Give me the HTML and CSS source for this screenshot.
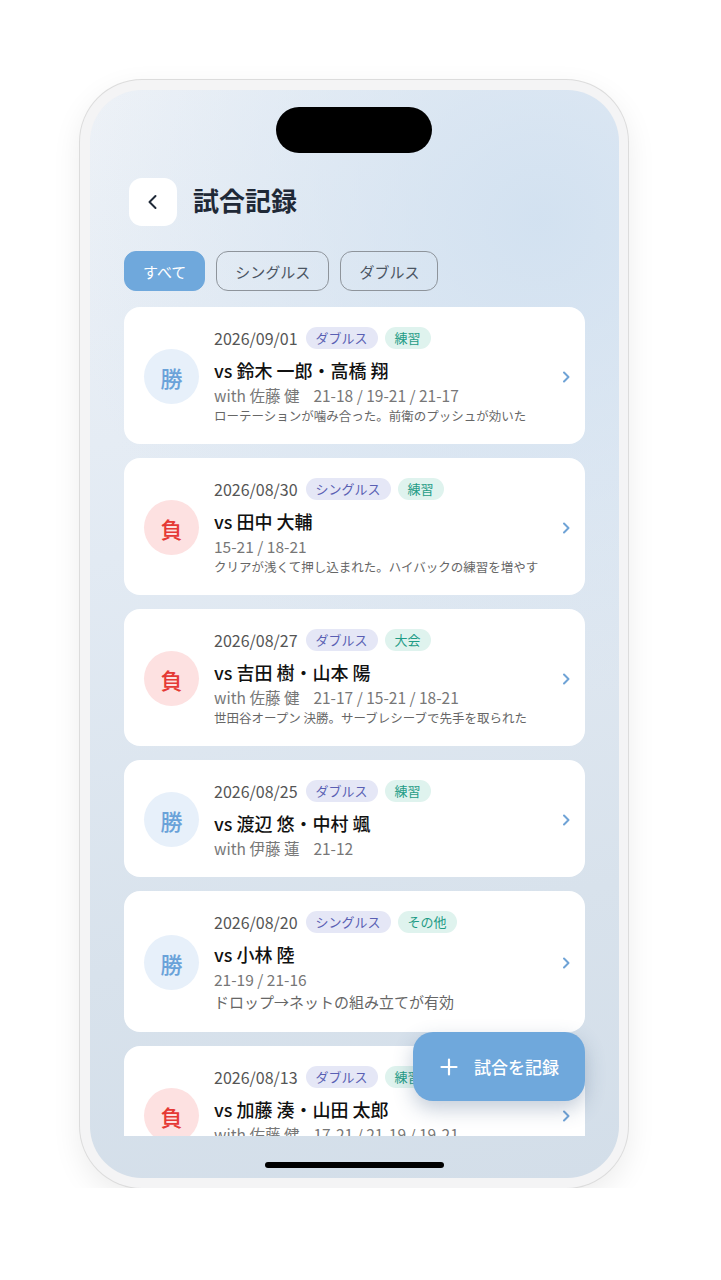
FILE: index.html
```html
<!DOCTYPE html>
<html>
    <head>
        <title>試合記録</title>
        <link rel="stylesheet" href="styles.css">
    </head>

    <body>
        <!--Phone frame-->
        <div class="PHONE">
            <div class="SCREEN">
                <div class="ISLAND"></div>

                <!--Header with back button and title-->
                <div class="HEADER">
                    <div class="BACK_BUTTON">
                        <svg width="18" height="18" viewBox="0 0 18 18"><path d="M11.5 3 L5.5 9 L11.5 15" fill="none" stroke="#1f2937" stroke-width="2" stroke-linecap="round" stroke-linejoin="round"/></svg>
                    </div>
                    <div class="TITLE">試合記録</div>
                </div>

                <!--Filter chips-->
                <div class="FILTERS">
                    <div class="CHIP CHIP_ACTIVE">すべて</div>
                    <div class="CHIP">シングルス</div>
                    <div class="CHIP">ダブルス</div>
                </div>

                <!--Match list-->
                <div class="MATCH_LIST">
                    <div class="CARD">
                        <div class="RESULT WIN">勝</div>
                        <div class="INFO">
                            <div class="META"><span class="DATE">2026/09/01</span><span class="TAG TAG_TYPE">ダブルス</span><span class="TAG TAG_KIND">練習</span></div>
                            <div class="OPPONENT">vs 鈴木 一郎・高橋 翔</div>
                            <div class="DETAIL">with 佐藤 健<span class="SCORE">21-18 / 19-21 / 21-17</span></div>
                            <div class="NOTE">ローテーションが噛み合った。前衛のプッシュが効いた</div>
                        </div>
                        <svg class="CHEVRON" width="10" height="14" viewBox="0 0 10 14"><path d="M3 2.5 L7.5 7 L3 11.5" fill="none" stroke="#6fa3d6" stroke-width="2" stroke-linecap="round" stroke-linejoin="round"/></svg>
                    </div>

                    <div class="CARD">
                        <div class="RESULT LOSE">負</div>
                        <div class="INFO">
                            <div class="META"><span class="DATE">2026/08/30</span><span class="TAG TAG_TYPE">シングルス</span><span class="TAG TAG_KIND">練習</span></div>
                            <div class="OPPONENT">vs 田中 大輔</div>
                            <div class="DETAIL">15-21 / 18-21</div>
                            <div class="NOTE">クリアが浅くて押し込まれた。ハイバックの練習を増やす</div>
                        </div>
                        <svg class="CHEVRON" width="10" height="14" viewBox="0 0 10 14"><path d="M3 2.5 L7.5 7 L3 11.5" fill="none" stroke="#6fa3d6" stroke-width="2" stroke-linecap="round" stroke-linejoin="round"/></svg>
                    </div>

                    <div class="CARD">
                        <div class="RESULT LOSE">負</div>
                        <div class="INFO">
                            <div class="META"><span class="DATE">2026/08/27</span><span class="TAG TAG_TYPE">ダブルス</span><span class="TAG TAG_KIND">大会</span></div>
                            <div class="OPPONENT">vs 吉田 樹・山本 陽</div>
                            <div class="DETAIL">with 佐藤 健<span class="SCORE">21-17 / 15-21 / 18-21</span></div>
                            <div class="NOTE">世田谷オープン 決勝。サーブレシーブで先手を取られた</div>
                        </div>
                        <svg class="CHEVRON" width="10" height="14" viewBox="0 0 10 14"><path d="M3 2.5 L7.5 7 L3 11.5" fill="none" stroke="#6fa3d6" stroke-width="2" stroke-linecap="round" stroke-linejoin="round"/></svg>
                    </div>

                    <div class="CARD">
                        <div class="RESULT WIN">勝</div>
                        <div class="INFO">
                            <div class="META"><span class="DATE">2026/08/25</span><span class="TAG TAG_TYPE">ダブルス</span><span class="TAG TAG_KIND">練習</span></div>
                            <div class="OPPONENT">vs 渡辺 悠・中村 颯</div>
                            <div class="DETAIL">with 伊藤 蓮<span class="SCORE">21-12</span></div>
                        </div>
                        <svg class="CHEVRON" width="10" height="14" viewBox="0 0 10 14"><path d="M3 2.5 L7.5 7 L3 11.5" fill="none" stroke="#6fa3d6" stroke-width="2" stroke-linecap="round" stroke-linejoin="round"/></svg>
                    </div>

                    <div class="CARD">
                        <div class="RESULT WIN">勝</div>
                        <div class="INFO">
                            <div class="META"><span class="DATE">2026/08/20</span><span class="TAG TAG_TYPE">シングルス</span><span class="TAG TAG_KIND">その他</span></div>
                            <div class="OPPONENT">vs 小林 陸</div>
                            <div class="DETAIL">21-19 / 21-16</div>
                            <div class="NOTE NOTE_LARGE">ドロップ→ネットの組み立てが有効</div>
                        </div>
                        <svg class="CHEVRON" width="10" height="14" viewBox="0 0 10 14"><path d="M3 2.5 L7.5 7 L3 11.5" fill="none" stroke="#6fa3d6" stroke-width="2" stroke-linecap="round" stroke-linejoin="round"/></svg>
                    </div>

                    <div class="CARD">
                        <div class="RESULT LOSE">負</div>
                        <div class="INFO">
                            <div class="META"><span class="DATE">2026/08/13</span><span class="TAG TAG_TYPE">ダブルス</span><span class="TAG TAG_KIND">練習</span></div>
                            <div class="OPPONENT">vs 加藤 湊・山田 太郎</div>
                            <div class="DETAIL">with 佐藤 健<span class="SCORE">17-21 / 21-19 / 19-21</span></div>
                            <div class="NOTE">スマッシュの決定率が低かった</div>
                        </div>
                        <svg class="CHEVRON" width="10" height="14" viewBox="0 0 10 14"><path d="M3 2.5 L7.5 7 L3 11.5" fill="none" stroke="#6fa3d6" stroke-width="2" stroke-linecap="round" stroke-linejoin="round"/></svg>
                    </div>
                </div>

                <!--Floating add button-->
                <div class="FAB">
                    <svg width="18" height="18" viewBox="0 0 18 18"><path d="M9 1.5 V16.5 M1.5 9 H16.5" stroke="#ffffff" stroke-width="2.2" stroke-linecap="round"/></svg>
                    <span>試合を記録</span>
                </div>

                <div class="HOME_BAR"></div>
            </div>
        </div>
    </body>
</html>
```

FILE: styles.css
```css
/*Accent blue: #6FA8DC*/
body {
    margin: 0;
    background-color: #ffffff;
    font-family: "Noto Sans CJK JP", "Noto Sans", sans-serif;
}
.PHONE {
    width: 529px;
    height: 1088px;
    margin-top: 80px;
    margin-left: 80px;
    padding: 10px 9px 10px 10px;
    border-radius: 62px;
    background-color: #f4f4f5;
    box-shadow: 0 0 0 1px #dcdcdc, 0 10px 30px rgba(0, 0, 0, 0.08);
}
.SCREEN {
    position: relative;
    overflow: hidden;
    box-sizing: border-box;
    height: 100%;
    padding: 88px 34px 42px 34px;
    border-radius: 52px;
    display: flex;
    flex-direction: column;
    background:
        radial-gradient(circle at 85% 12%, rgba(208, 224, 240, 0.9) 0%, rgba(208, 224, 240, 0) 45%),
        linear-gradient(170deg, #eef2f7 0%, #e2eaf3 40%, #d8e2ec 75%, #d3dee9 100%);
}
.ISLAND {
    position: absolute;
    top: 17px;
    left: 186px;
    width: 156px;
    height: 46px;
    border-radius: 23px;
    background-color: #000000;
}
/*Header*/
.HEADER {
    display: flex;
    align-items: center;
    gap: 16px;
    padding-left: 5px;
}
.BACK_BUTTON {
    width: 48px;
    height: 48px;
    border-radius: 13px;
    background-color: #ffffff;
    display: flex;
    align-items: center;
    justify-content: center;
}
.TITLE {
    margin-bottom: 6px;
    font-size: 26px;
    font-weight: 700;
    color: #1f2937;
}
/*Filters*/
.FILTERS {
    display: flex;
    gap: 11px;
    margin-top: 25px;
}
.CHIP {
    height: 40px;
    box-sizing: border-box;
    padding: 0 18px;
    border: 1px solid #8e949b;
    border-radius: 12px;
    font-size: 15px;
    color: #4b5563;
    display: flex;
    align-items: center;
}
.CHIP_ACTIVE {
    border-color: #6fa8dc;
    background-color: #6fa8dc;
    color: #ffffff;
}
/*Match cards*/
.MATCH_LIST {
    flex: 1;
    overflow: hidden;
    margin-top: 16px;
    display: flex;
    flex-direction: column;
    gap: 14px;
}
.CARD {
    flex-shrink: 0;
    display: flex;
    align-items: center;
    padding: 20px 14px 18px 20px;
    border-radius: 16px;
    background-color: #ffffff;
}
.RESULT {
    width: 55px;
    height: 55px;
    flex-shrink: 0;
    border-radius: 50%;
    display: flex;
    align-items: center;
    justify-content: center;
    font-size: 22px;
    font-weight: 500;
}
.WIN {
    background-color: #e7f0fa;
    color: #6aa2d9;
}
.LOSE {
    background-color: #fde1e1;
    color: #e53935;
}
.INFO {
    flex: 1;
    margin-left: 15px;
}
.META {
    display: flex;
    align-items: center;
    height: 22px;
}
.DATE {
    font-size: 16px;
    color: #555555;
    margin-right: 8px;
}
.TAG {
    height: 22px;
    padding: 0 10px;
    margin-right: 7px;
    border-radius: 11px;
    font-size: 13px;
    line-height: 22px;
}
.TAG_TYPE {
    background-color: #e5e7f6;
    color: #5a5fb3;
}
.TAG_KIND {
    background-color: #dff3ee;
    color: #1f9c86;
}
.OPPONENT {
    margin-top: 8px;
    font-size: 18px;
    line-height: 26px;
    font-weight: 500;
    color: #111111;
}
.DETAIL {
    margin-top: 1px;
    font-size: 15.5px;
    line-height: 22px;
    color: #777777;
}
.SCORE {
    margin-left: 14px;
}
.NOTE {
    font-size: 12.5px;
    line-height: 20px;
    color: #666666;
}
.NOTE_LARGE {
    font-size: 15px;
    line-height: 24px;
}
.CHEVRON {
    flex-shrink: 0;
    margin-left: 8px;
}
/*Floating button*/
.FAB {
    position: absolute;
    right: 34px;
    bottom: 77px;
    width: 172px;
    height: 69px;
    box-sizing: border-box;
    padding-left: 27px;
    border-radius: 20px;
    background-color: #6fa8dc;
    box-shadow: 0 8px 20px rgba(60, 90, 130, 0.3);
    display: flex;
    align-items: center;
    gap: 16px;
    color: #ffffff;
    font-size: 17px;
    font-weight: 500;
}
.HOME_BAR {
    position: absolute;
    bottom: 10px;
    left: 175px;
    width: 179px;
    height: 6px;
    border-radius: 3px;
    background-color: #000000;
}
```
